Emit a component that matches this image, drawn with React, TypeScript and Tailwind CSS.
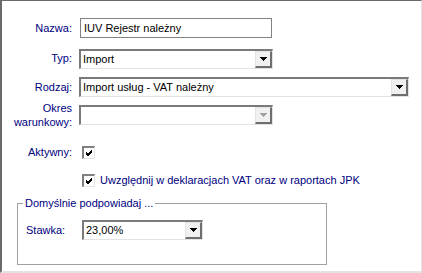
import React from "react";

const Arrow = ({ disabled }: { disabled?: boolean }) => (
  <svg width="7" height="4" viewBox="0 0 7 4" className="block">
    <polygon points="0,0 7,0 3.5,4" fill={disabled ? "#a0a0a0" : "#000"} shapeRendering="crispEdges" />
  </svg>
);

const Combo = ({
  value,
  width,
  disabled,
}: {
  value: string;
  width: string;
  disabled?: boolean;
}) => (
  <div
    className={`${width} h-[20px] flex items-stretch bg-white border-t-2 border-l-2 border-b border-r border-t-[#7a7a7a] border-l-[#7a7a7a] border-b-[#e3e3e3] border-r-[#e3e3e3]`}
  >
    <div className="flex-1 flex items-center pl-[2px] text-black leading-none overflow-hidden whitespace-nowrap">
      {value}
    </div>
    <div className="w-[17px] flex items-center justify-center bg-[#f0f0f0] border-t border-l border-b-2 border-r-2 border-t-[#e3e3e3] border-l-[#e3e3e3] border-b-[#6e6e6e] border-r-[#6e6e6e]">
      <Arrow disabled={disabled} />
    </div>
  </div>
);

const Check = () => (
  <div className="w-[13px] h-[13px] flex items-center justify-center bg-white border-t-2 border-l-2 border-b border-r border-t-[#808080] border-l-[#808080] border-b-[#e3e3e3] border-r-[#e3e3e3]">
    <svg width="7" height="7" viewBox="0 0 7 7" className="block">
      <path
        d="M0 2 L2 4 L6 0 M0 3 L2 5 L6 1 M0 4 L2 6 L6 2"
        stroke="#000"
        strokeWidth="1"
        fill="none"
        shapeRendering="crispEdges"
      />
    </svg>
  </div>
);

export default function App() {
  return (
    <div
      className="w-[422px] h-[273px] bg-white border-t border-l-2 border-r border-b-2 border-t-[#6a6a6a] border-l-[#6a6a6a] border-r-[#e3e3e3] border-b-[#e3e3e3] pt-[17px] text-[11px] text-[#000080]"
      style={{ fontFamily: '"Liberation Sans", Arial, sans-serif' }}
    >
      {/* Nazwa */}
      <div className="flex items-center h-[20px]">
        <div className="w-[70px] text-right leading-none">Nazwa:</div>
        <div className="ml-[8px] w-[192px] h-[20px] border border-[#828282] flex items-center pl-[3px] text-black leading-none">
          IUV Rejestr należny
        </div>
      </div>

      {/* Typ */}
      <div className="flex items-center h-[21px] mt-[10px]">
        <div className="w-[70px] text-right leading-none">Typ:</div>
        <div className="ml-[7px]">
          <Combo value="Import" width="w-[194px]" />
        </div>
      </div>

      {/* Rodzaj */}
      <div className="flex items-center h-[20px] mt-[8px]">
        <div className="w-[70px] text-right leading-none">Rodzaj:</div>
        <div className="ml-[7px]">
          <Combo value="Import usług - VAT należny" width="w-[330px]" />
        </div>
      </div>

      {/* Okres */}
      <div className="flex items-center h-[20px] mt-[8px]">
        <div className="w-[70px] text-right leading-[14px]">
          Okres
          <br />
          warunkowy:
        </div>
        <div className="ml-[7px]">
          <Combo value="" width="w-[194px]" disabled />
        </div>
      </div>

      {/* Aktywny */}
      <div className="flex items-center h-[13px] mt-[21px]">
        <div className="w-[70px] text-right leading-none">Aktywny:</div>
        <div className="ml-[10px]">
          <Check />
        </div>
      </div>

      {/* Uwzględnij */}
      <div className="flex items-center h-[13px] mt-[15px] pl-[80px]">
        <Check />
        <div className="ml-[5px] leading-none whitespace-nowrap">
          Uwzględnij w deklaracjach VAT oraz w raportach JPK
        </div>
      </div>

      {/* Group */}
      <fieldset className="ml-[15px] mt-[10px] w-[310px] border border-[#a0a0a0] pb-[24px]">
        <legend className="ml-[5px] px-[2px] leading-[13px]">Domyślnie podpowiadaj ...</legend>
        <div className="flex items-center h-[20px] mt-[10px] pl-[8px]">
          <div className="w-[56px] leading-none">Stawka:</div>
          <Combo value="23,00%" width="w-[121px]" />
        </div>
      </fieldset>
    </div>
  );
}
